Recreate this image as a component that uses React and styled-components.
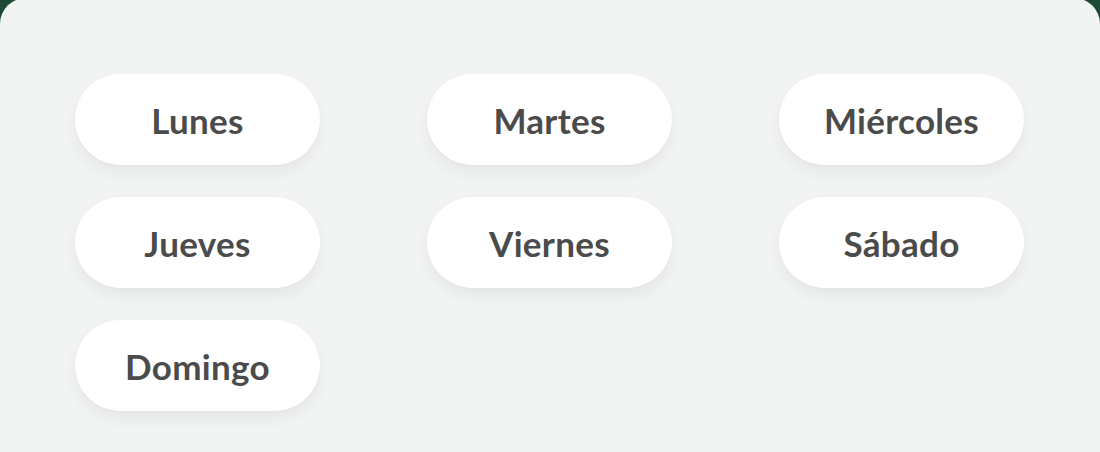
import React from "react";
import styled, { createGlobalStyle } from "styled-components";

const Global = createGlobalStyle`
  html, body {
    margin: 0;
    padding: 0;
    background: #1d4a37;
  }
  body {
    font-family: Lato, "Noto Sans", sans-serif;
  }
`;

const Screen = styled.div`
  width: 1100px;
  height: 452px;
  overflow: hidden;
  background: #1d4a37;
`;

/* Light sheet sliding up over the green backdrop, only its top corners show */
const Sheet = styled.section`
  box-sizing: border-box;
  height: calc(100% + 2px);
  margin-top: -2px;
  padding: 76px 76px 0 75px;
  background: #f2f3f3;
  border-radius: 26px 26px 0 0;
`;

const DayGrid = styled.div`
  display: grid;
  grid-template-columns: repeat(3, 245px);
  grid-auto-rows: 91px;
  column-gap: 107px;
  row-gap: 32px;
`;

const DayPill = styled.button`
  display: flex;
  align-items: center;
  justify-content: center;
  border: none;
  border-radius: 46px;
  background: #ffffff;
  box-shadow: 0 8px 16px rgba(0, 0, 0, 0.05), 0 1px 3px rgba(0, 0, 0, 0.03);
  font-family: Lato, "Noto Sans", sans-serif;
  font-weight: 700;
  font-size: 35px;
  color: #4b4b4b;
  letter-spacing: 0.3px;
  cursor: pointer;
`;

const days = ["Lunes", "Martes", "Miércoles", "Jueves", "Viernes", "Sábado", "Domingo"];

export default function App() {
  return (
    <Screen>
      <Global />
      <Sheet>
        <DayGrid>
          {days.map((d) => (
            <DayPill key={d}>{d}</DayPill>
          ))}
        </DayGrid>
      </Sheet>
    </Screen>
  );
}
